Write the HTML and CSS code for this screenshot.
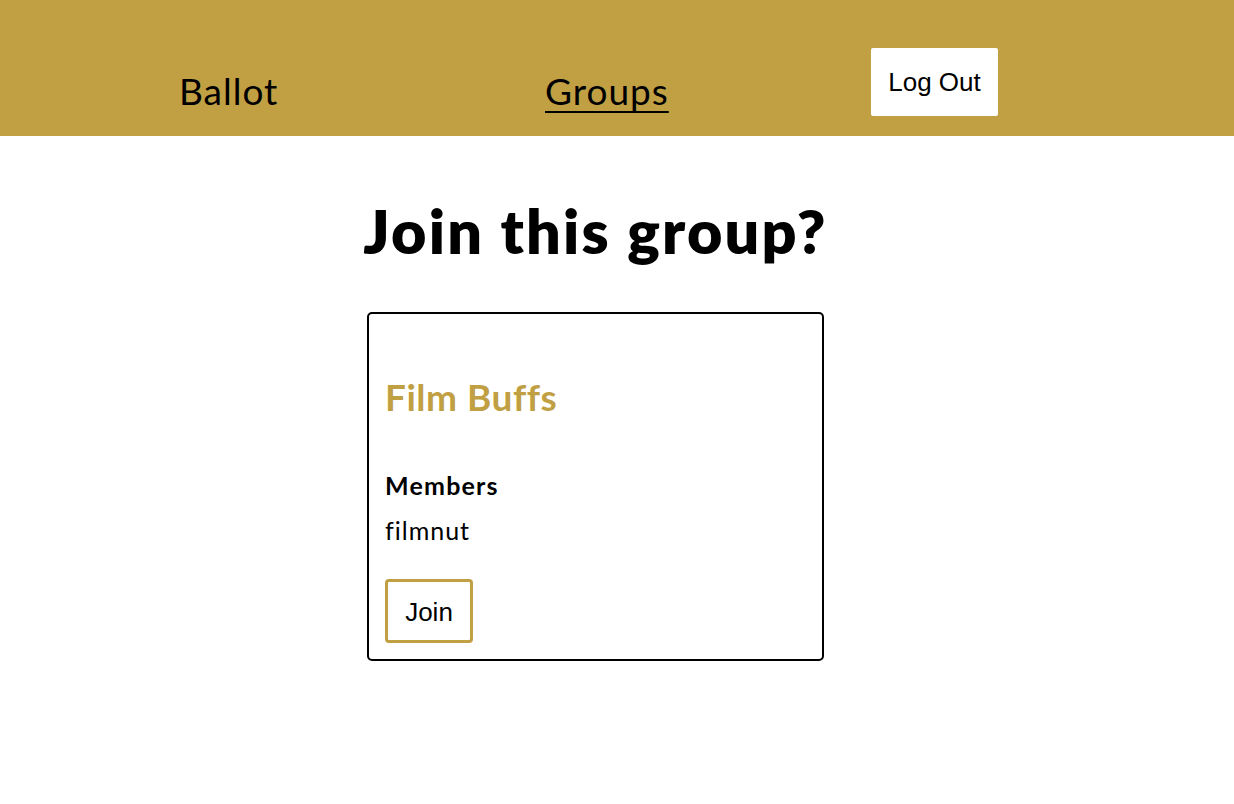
FILE: index.html
```html
<!DOCTYPE html>
<html>
<head>
<meta charset="utf-8">
<title>Join this group?</title>
<link rel="stylesheet" href="styles.css">
</head>
<body>
<header class="topbar">
  <nav class="nav">
    <a class="nav-link nav-ballot" href="#">Ballot</a>
    <a class="nav-link nav-groups is-active" href="#">Groups</a>
    <button class="logout" type="button">Log Out</button>
  </nav>
</header>
<main class="main">
  <h1 class="title">Join this group?</h1>
  <section class="card">
    <h2 class="group-name">Film Buffs</h2>
    <h3 class="members-label">Members</h3>
    <p class="member">filmnut</p>
    <button class="join" type="button">Join</button>
  </section>
</main>
</body>
</html>
```
FILE: styles.css
```css
* { box-sizing: border-box; }
html, body { margin: 0; padding: 0; background: #fff; }
body {
  font-family: Lato, "Open Sans", sans-serif;
  color: #000;
}
.topbar {
  background: #c19f43;
  height: 136px;
}
.nav {
  display: flex;
  align-items: flex-start;
  padding-left: 179px;
  height: 100%;
}
.nav-link {
  color: #000;
  text-decoration: none;
  font-size: 37px;
  line-height: 44px;
  letter-spacing: 1px;
  margin-top: 69px;
}
.nav-ballot { width: 98px; }
.nav-groups {
  width: 126px;
  margin-left: 268px;
  text-decoration: underline;
  text-decoration-thickness: 2px;
  text-underline-offset: 6px;
}
.logout {
  margin-top: 48px;
  margin-left: 200px;
  background: #fff;
  border: none;
  border-radius: 2px;
  width: 127px;
  height: 68px;
  padding: 0;
  font-family: "Liberation Sans", Arial, sans-serif;
  font-size: 26px;
  color: #000;
}
.main {
  display: flex;
  flex-direction: column;
  align-items: center;
  padding-right: 43px;
}
.title {
  margin: 50px 0 0 0;
  font-size: 61px;
  line-height: 90px;
  font-weight: 800;
  letter-spacing: 2.2px;
  padding-left: 0;
}
.card {
  margin-top: 36px;
  width: 457px;
  border: 2px solid #000;
  border-radius: 5px;
  padding: 61px 16px 16px 16px;
  display: flex;
  flex-direction: column;
  align-items: flex-start;
}
.group-name {
  margin: 0;
  color: #c19f43;
  font-size: 37px;
  line-height: 44px;
  font-weight: 700;
  letter-spacing: 0.5px;
}
.members-label {
  margin: 51px 0 0 0;
  font-size: 25px;
  line-height: 30px;
  font-weight: 700;
  letter-spacing: 1.2px;
}
.member {
  margin: 15px 0 0 0;
  font-size: 25px;
  line-height: 30px;
  letter-spacing: 1px;
}
.join {
  margin-top: 34px;
  background: #fff;
  border: 3px solid #c19f43;
  border-radius: 4px;
  width: 88px;
  height: 64px;
  padding: 2px 0 0 0;
  font-family: "Liberation Sans", Arial, sans-serif;
  font-size: 26px;
  color: #000;
}
```
